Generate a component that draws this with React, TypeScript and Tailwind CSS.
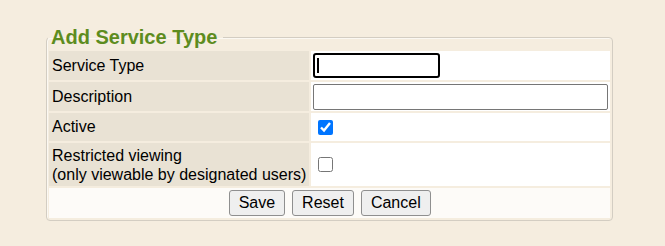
import React from 'react';

const labelCell = 'bg-[#e9e2d4] px-[3px] align-middle text-left font-normal whitespace-nowrap w-[261px]';
const valueCell = 'bg-white px-[2px] align-middle';
const btn = 'h-[26px] px-[9px] bg-[#efefef] border border-[#8f8f8f] rounded-[3px] leading-[20px]';

export default function App() {
    return (
        <div className="w-full h-[246px] bg-[#f5eddf] pt-[26px] font-['Liberation_Sans',Arial,sans-serif] text-[16px] text-black">
            <fieldset className="ml-[46px] w-[565px] border border-[#d3cdc2] shadow-[inset_1px_1px_0_#fbf8f2] rounded-[4px] px-0 pb-0">
                <legend className="ml-[1px] px-[3px] pr-[6px] text-[20px] leading-[23px] font-bold text-[#5d8c1e]">
                    Add Service Type
                </legend>
                <table className="w-full border-separate border-spacing-[2px]">
                    <tbody>
                        <tr className="h-[29px]">
                            <th className={labelCell}>Service Type</th>
                            <td className={valueCell}>
                                <div className="relative w-[127px]">
                                    <input
                                        type="text"
                                        className="block w-[127px] h-[25px] bg-white border-2 border-black rounded-[3px] outline-none px-[3px]"
                                    />
                                    <span className="absolute left-[4px] top-[5px] w-[2px] h-[15px] bg-black" />
                                </div>
                            </td>
                        </tr>
                        <tr className="h-[29px]">
                            <th className={labelCell}>Description</th>
                            <td className={valueCell}>
                                <input
                                    type="text"
                                    className="block w-[295px] h-[26px] bg-white border border-[#767676] rounded-[2px] outline-none px-[3px]"
                                />
                            </td>
                        </tr>
                        <tr className="h-[28px]">
                            <th className={labelCell}>Active</th>
                            <td className={valueCell}>
                                <input type="checkbox" defaultChecked className="block w-[15px] h-[15px] ml-[5px] accent-[#0075ff]" />
                            </td>
                        </tr>
                        <tr className="h-[43px]">
                            <th className={`${labelCell} leading-[19px]`}>
                                Restricted viewing
                                <br />
                                (only viewable by designated users)
                            </th>
                            <td className={valueCell}>
                                <input type="checkbox" className="block w-[15px] h-[15px] ml-[5px]" />
                            </td>
                        </tr>
                        <tr className="h-[30px]">
                            <td colSpan={2} className="bg-[#fdfbf8] text-center align-middle">
                                <div className="flex justify-center gap-[7px]">
                                    <button className={btn}>Save</button>
                                    <button className={btn}>Reset</button>
                                    <button className={btn}>Cancel</button>
                                </div>
                            </td>
                        </tr>
                    </tbody>
                </table>
            </fieldset>
        </div>
    );
}
